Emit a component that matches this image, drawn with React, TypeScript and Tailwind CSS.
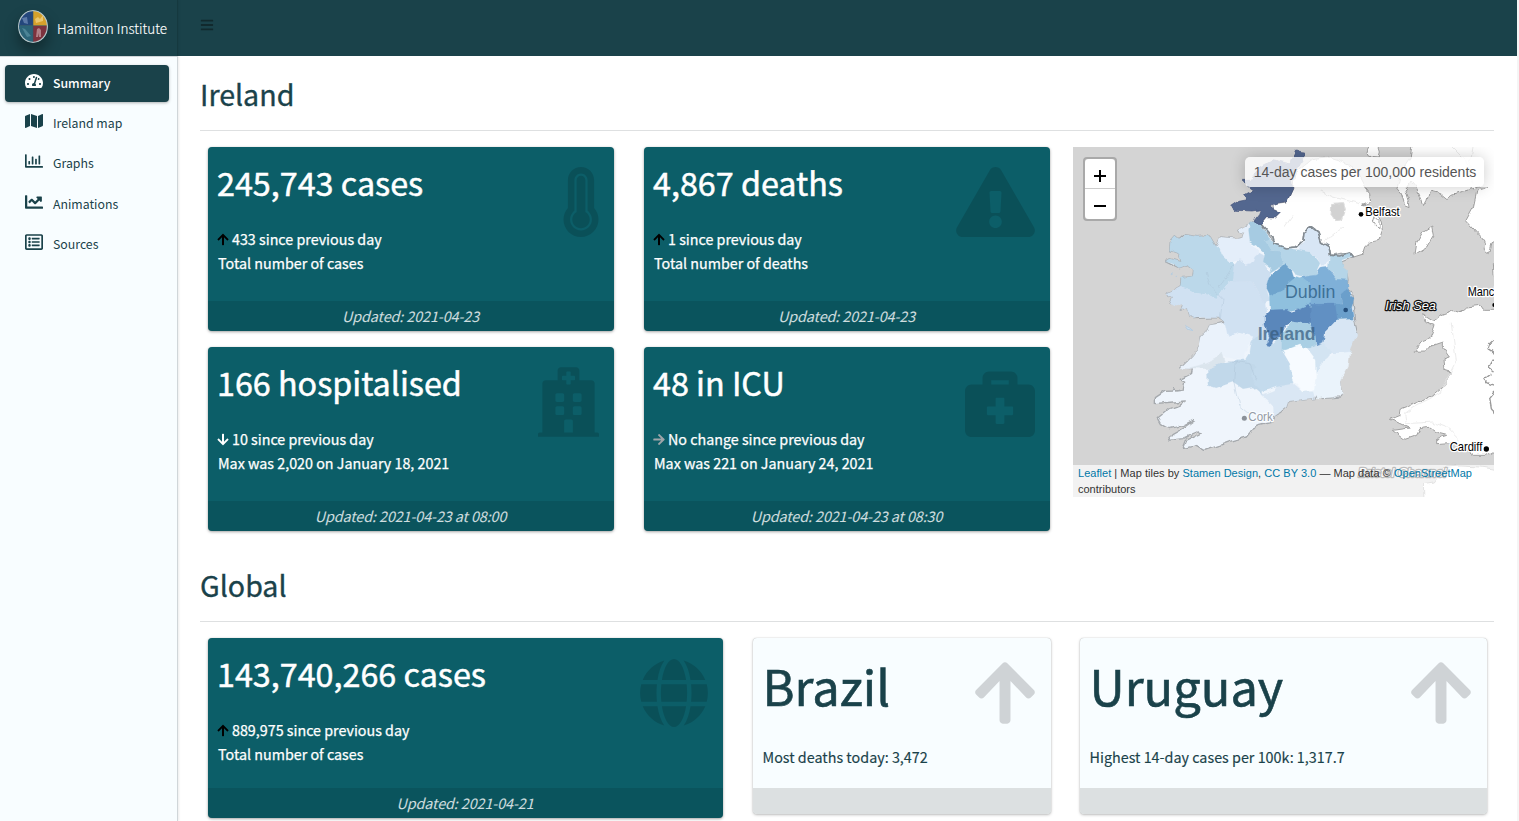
import type { ReactNode } from 'react';
import {
  FaTachometerAlt, FaMap, FaRegChartBar, FaChartLine, FaRegListAlt, FaBars,
  FaThermometerFull, FaExclamationTriangle, FaHospital, FaBriefcaseMedical,
  FaGlobe, FaArrowUp, FaArrowDown, FaArrowRight,
} from 'react-icons/fa';

const NAV = [
  { label: 'Summary', icon: <FaTachometerAlt />, active: true, gap: '' },
  { label: 'Ireland map', icon: <FaMap />, active: false, gap: 'mt-[3px]' },
  { label: 'Graphs', icon: <FaRegChartBar />, active: false, gap: 'mt-[3px]' },
  { label: 'Animations', icon: <FaChartLine />, active: false, gap: 'mt-1' },
  { label: 'Sources', icon: <FaRegListAlt />, active: false, gap: 'mt-[3px]' },
];

function Crest() {
  return (
    <svg viewBox="0 0 30 33" className="h-[33px] w-[30px] rounded-full shadow-[0_8px_14px_rgba(0,0,0,0.35)]">
      <defs>
        <clipPath id="crest"><ellipse cx="15" cy="16.500" rx="13.800" ry="15.300" /></clipPath>
      </defs>
      <ellipse cx="15" cy="16.500" rx="15" ry="16.500" fill="#b4c4c8" />
      <g clipPath="url(#crest)">
        <rect width="15" height="19" fill="#24477c" />
        <rect x="15" width="15" height="16" fill="#d6a12b" />
        <rect y="15" width="15" height="18" fill="#2c6478" />
        <rect x="15" y="16" width="15" height="17" fill="#7d323e" />
        <path d="M4 8l5-1 1 7-4-1z" fill="#5c7aa8" />
        <path d="M17 9l3-2 2 2 3-4 0 6-7 2z" fill="#e9c66e" />
        <path d="M4 18l3 1 6 7-4 1z" fill="#4c8496" />
        <path d="M18 27l1-8 2-1 2 2 0 7h-2l0-4-1 4z" fill="#b08088" />
        <path d="M15 0v33M0 15.500h30" stroke="#38546a" strokeWidth=".6" />
      </g>
    </svg>
  );
}

type CardProps = {
  title: string; icon: ReactNode; lines: ReactNode[]; updated: string; box: string; iconBox: string;
};

function StatCard({ title, icon, lines, updated, box, iconBox }: CardProps) {
  return (
    <div className={`relative flex flex-col overflow-hidden rounded bg-[#0c5e68] text-white shadow-[0_0_1px_rgba(0,0,0,0.125),0_1px_3px_rgba(0,0,0,0.35)] ${box}`}>
      <div className="flex-1 pt-[14px] pl-[9px]">
        <h3 className="text-[32.300px] leading-[43px] whitespace-nowrap [-webkit-text-stroke:0.5px_white]">{title}</h3>
        <div className="mt-[23px] pl-px text-[14.300px] leading-6 [-webkit-text-stroke:0.25px_white]">
          {lines.map((line, i) => <p key={i} className="flex items-center whitespace-nowrap">{line}</p>)}
        </div>
      </div>
      <div className={`absolute text-black/15 ${iconBox}`}>{icon}</div>
      <div className="h-[30px] bg-black/10 pr-px text-center text-[14.400px] leading-[29px] text-white/80 italic">
        <span className="inline-block tracking-[-0.12px]">{updated}</span>
      </div>
    </div>
  );
}

function CountryCard({ title, text, box }: { title: string; text: string; box: string }) {
  return (
    <div className={`relative flex h-44 flex-col overflow-hidden rounded bg-[#f8fdff] text-[#1a424a] shadow-[0_0_1px_rgba(0,0,0,0.3),0_1px_3px_rgba(0,0,0,0.25)] ${box}`}>
      <div className="flex-1 px-[10px] pt-3">
        <h3 className="text-[48.800px] leading-[70px] [-webkit-text-stroke:0.6px_#1a424a]">{title}</h3>
        <p className="mt-[25px] text-[14.350px] leading-6 whitespace-nowrap [-webkit-text-stroke:0.15px_#1a424a]">{text}</p>
      </div>
      <FaArrowUp className="absolute top-5 right-[11px] h-[70px] w-[70px] text-[#cfd3d6]" />
      <div className="h-[26px] bg-[#dce0e1]" />
    </div>
  );
}

const OUTER_COUNTIES: [string, string][] = [
  ['#bbd8ea', 'M335 260L328 270 318 275 305 265 292 280 290 310 318 320 325 345 290 335 275 343 300 350 320 365 345 355 365 370 362 388 325 392 322 422 360 435 400 440 430 457 460 415 480 400 487 380 485 350 470 335 450 325 445 310 428 298 412 270 400 264 375 266z'],
  ['#d0e1f2', 'M322 420L300 432 283 442 300 450 290 470 310 478 330 470 325 490 345 480 350 510 362 515 380 510 440 512 455 525 450 560 465 570 500 558 530 565 550 600 600 600 580 500 575 460 560 440 540 405 480 400 460 415 430 457 400 440 360 435z'],
  ['#e4eefa', 'M428 298L440 270 498 275 508 272 512 258 492 250 527 232 532 250 530 285 550 310 558 318 545 330 540 345 515 355 500 335 470 345 450 325 445 310z'],
  ['#cddff0', 'M487 352L500 335 515 355 540 345 545 330 558 318 572 325 575 350 593 380 580 425 590 460 575 470 560 440 540 405 480 402z'],
  ['#dae7f4', 'M566 745L605 730 616 711 663 711 690 734 721 734 725 755 645 765 640 780 600 810 598 775z'],
  ['#eaf2fb', 'M455 528L440 530 410 535 400 555 385 570 380 595 360 625 320 665 350 665 400 655 440 625 510 637 525 600 540 572 495 558 465 572z'],
  ['#c1d8ea', 'M403 662L440 650 490 638 550 640 570 745 540 720 510 725 480 705 430 722 405 715z'],
  ['#dbe5ed', 'M350 662L400 650 430 635 445 615 455 645 400 665z'],
];

const INNER_COUNTIES: [string, string][] = [
  ['#c4dbed', 'M95 365L135 325 140 350 150 378 185 345 185 390 215 440 222 490 170 500 125 515 90 470 110 440 75 420 90 395z'],
  ['#a6cbe2', 'M90 8L120 10 140 40 150 60 137 65 155 95 180 95 192 135 150 160 155 145 130 125 135 100 115 80 90 65 86 30z'],
  ['#b5d5e8', 'M135 65L150 60 165 70 210 85 235 90 270 95 300 132 285 165 262 170 230 165 220 150 190 133 180 97 155 95z'],
  ['#d8e6f5', 'M235 90L240 75 255 65 252 40 272 22 295 40 305 70 325 75 330 105 330 118 305 140 290 115 270 95z'],
  ['#b5d5e8', 'M330 105L360 107 385 95 398 108 365 120 370 142 383 150 382 182 350 180 340 160 325 145 328 120z'],
  ['#7fb0d8', 'M245 172L285 165 300 145 325 142 350 178 382 180 385 210 362 225 365 265 340 256 270 256 268 220 240 200z'],
  ['#8fc0de', 'M148 222L190 210 205 185 220 168 250 175 270 190 272 260 230 268 200 272 150 270z'],
  ['#6fa4cd', 'M140 205L150 170 195 133 215 150 222 172 200 190 190 215 150 225z'],
  ['#6b9fcb', 'M362 225L385 208 392 230 402 235 395 262 400 302 345 300 340 256 365 250z'],
  ['#5a87bb', 'M135 285L150 270 200 268 215 275 262 255 274 262 272 315 245 315 215 305 195 320 182 350 160 360 152 378 138 375 148 350 135 315z'],
  ['#6190c3', 'M272 253L345 252 352 300 315 335 312 375 288 380 285 345 270 320z'],
  ['#a9cfe4', 'M185 345L215 305 270 312 286 345 287 387 245 385 215 394 185 392z'],
  ['#d8e6f4', 'M350 300L402 298 410 350 388 402 330 398 310 372 318 335z'],
  ['#d3e4f2', 'M270 385L312 370 332 395 325 415 295 440 283 472 272 430 258 385z'],
  ['#eaf3fb', 'M283 470L300 435 345 400 390 396 385 440 362 480 368 520 340 532 290 534 280 515z'],
  ['#f7fbff', 'M190 395L240 375 258 385 285 420 287 470 282 510 250 515 220 480 210 430z'],
];

function IrelandMap() {
  return (
    <div className="relative h-[350px] w-[421px] shrink-0 overflow-hidden bg-[#d4d4d4] font-['Liberation_Sans',sans-serif]">
      <svg viewBox="0 0 1263 1050" className="block h-[350px] w-[421px]">
        <defs>
          <filter id="rough" x="0" y="0" width="100%" height="100%" colorInterpolationFilters="sRGB">
            <feTurbulence type="fractalNoise" baseFrequency="0.04" numOctaves="2" seed="4" result="n" />
            <feDisplacementMap in="SourceGraphic" in2="n" scale="16" xChannelSelector="R" yChannelSelector="G" />
          </filter>
        </defs>
        <g filter="url(#rough)">
          <path d="M-30 -30H1300V1100H-30z" fill="#d4d4d4" />
          <g fill="#fff" stroke="#a0a0a0" strokeWidth="3" strokeLinejoin="round">
            <path d="M565 230L580 212 605 212 622 195 597 188 597 170 640 165 659 125 665 80 695 55 720 35 760 30 800 42 840 60 862 95 875 120 890 140 893 165 868 175 893 180 912 200 925 225 928 250 918 280 890 285 875 300 868 322 842 330 830 315 800 327 773 325 768 300 745 285 735 255 715 240 693 255 690 280 670 300 640 303 605 290 600 270z" />
            <path d="M1020 -25L1012 30 985 70 978 100 972 125 985 140 997 180 1008 185 1005 160 996 130 1015 105 1030 125 1042 150 1053 177 1062 160 1070 132 1100 140 1122 158 1136 145 1160 138 1185 130 1215 120 1245 120 1212 130 1201 180 1179 220 1220 265 1236 285 1233 310 1246 320 1254 290 1290 280V-25z" />
            <path d="M890 -15L882 15 890 28 915 30 919 15 910 -15zM1076 240L1081 265 1061 300 1026 322 1031 290 1051 255zM903 205l15 15 0 25-10-8-10-15z" />
            <path d="M1049 500L1081 520 1101 505 1141 490 1161 497 1181 480 1221 475 1231 490 1295 490V895L1241 925 1201 925 1161 895 1131 887 1091 890 1091 875 1121 865 1101 860 1071 840 1041 845 1031 865 996 877 961 850 1009 843 971 825 949 817 979 805 981 787 1036 765 1081 745 1111 720 1133 675 1116 670 1113 635 1129 630 1111 605 1111 585 1066 600 1055 612 1024 613 1046 585 1071 575 1086 535 1060 525z" />
            <path d="M1290 330L1258 350 1260 385 1290 400zM1290 970L1221 960 1161 957 1121 960 1101 975 1081 1005 1051 1010 1054 1080H1290z" />
            <path d="M776 172L812 170 817 190 808 219 785 221 774 205z" fill="#d2d2d2" stroke="#ddd" />
          </g>
          <g fill="none" stroke="#999" strokeWidth="4">
            <path d="M1266 575L1250 590 1245 605 1266 620M1263 635L1248 660 1268 675M1255 678L1233 695 1245 708 1266 715M1266 735L1250 755 1255 785 1266 800" />
          </g>
          <g fill="none" stroke="#ececec" strokeWidth="3">
            <path d="M740 130L780 150 860 170M660 205L635 240M810 240L780 265 750 285M1140 0L1180 40 1200 110M1135 530L1150 640 1100 740 1030 775 995 800 1000 830 1080 825 1120 840 1160 880M1200 0L1190 60" />
          </g>
          <path d="M527 232L492 250 512 258 508 272 498 275 440 270 428 298 412 270 400 264 375 266 335 260 318 275 305 265 292 280 290 310 318 320 325 345 290 335 275 343 320 365 345 355 365 370 362 388 325 392 322 420 283 442 300 450 290 470 330 470 325 490 345 480 350 510 362 515 440 512 455 525 410 535 400 555 385 570 380 595 360 625 320 663 358 665 355 680 320 698 335 705 330 732 308 735 305 722 300 732 275 733 247 752 247 770 300 765 340 762 320 775 280 790 252 812 262 830 290 845 330 835 365 818 335 840 300 860 285 880 330 875 375 855 385 858 340 880 330 905 370 895 395 910 440 895 480 880 520 870 540 845 560 835 600 825 605 805 621 797 640 780 645 765 725 755 733 735 745 755 800 750 808 735 800 690 825 625 830 590 853 555 845 525 840 465 835 435 818 425 825 400 822 380 810 370 805 345 842 330 830 315 773 325 768 300 745 285 735 255 715 240 693 255 690 280 670 300 640 303 605 290 565 230z" fill="#eff5fc" stroke="#a5a9ad" strokeWidth="4" strokeLinejoin="round" />
          {OUTER_COUNTIES.map(([fill, d], i) => <path key={i} d={d} fill={fill} stroke={fill} strokeWidth="1" />)}
          <g transform="translate(441 219)">
            {INNER_COUNTIES.map(([fill, d], i) => <path key={i} d={d} fill={fill} stroke={fill} strokeWidth="1" />)}
          </g>
          <path d="M400 375L410 415 450 455 442 515M485 350L440 420M490 640L485 705 500 775 530 800M460 640L530 650 550 700" fill="none" stroke="#a9c0d4" strokeOpacity=".4" strokeWidth="3" />
          <path d="M565 230L600 270 605 290 640 303 670 300 690 280 693 255 715 240 735 255 745 285 768 300 773 325 800 327 830 315 842 330" fill="none" stroke="#838b92" strokeWidth="5" strokeLinejoin="round" />
          <path d="M505 100L527 120 540 130 512 145 520 155 495 160 473 175 490 190 540 192 565 188 560 200 548 215 543 228 565 230 580 212 605 212 622 195 600 190 595 175 610 168 642 163 659 125 655 90 690 40 695 15 668 12 650 50 600 38 560 60 530 100z" fill="#53678f" stroke="#42527a" strokeWidth="2" />
          <path d="M335 535l15 8 10 8-18-5zM292 382l8-5M305 385l8 0" fill="#cfe0f1" stroke="#b6cde0" strokeWidth="3" />
        </g>
        <g fontFamily="Liberation Sans, sans-serif" strokeLinejoin="round">
          <circle cx="864" cy="202" r="7" />
          <text x="877" y="208" fontSize="37" textLength="103" lengthAdjust="spacingAndGlyphs" stroke="#fff" strokeWidth="8" style={{ paintOrder: 'stroke' }}>Belfast</text>
          <text x="1184" y="447" fontSize="37" textLength="98" lengthAdjust="spacingAndGlyphs" stroke="#fff" strokeWidth="8" style={{ paintOrder: 'stroke' }}>Manch</text>
          <circle cx="1264" cy="474" r="6" />
          <text x="937" y="490" fontSize="37" textLength="152" lengthAdjust="spacingAndGlyphs" fontStyle="italic" fill="#fff" stroke="#111" strokeWidth="7" style={{ paintOrder: 'stroke' }}>Irish Sea</text>
          <text x="636" y="454" fontSize="55" textLength="151" lengthAdjust="spacingAndGlyphs" fill="#2c5d84" fillOpacity=".8">Dublin</text>
          <circle cx="818" cy="489" r="7" fill="#254f7c" />
          <text x="554" y="579" fontSize="53" fontWeight="bold" textLength="174" lengthAdjust="spacingAndGlyphs" fill="#365c7e" fillOpacity=".72">Ireland</text>
          <circle cx="514" cy="814" r="7.500" fill="#8b9199" />
          <text x="526" y="821" fontSize="37" textLength="73" lengthAdjust="spacingAndGlyphs" fill="#949aa5" stroke="#fafdff" strokeWidth="7" style={{ paintOrder: 'stroke' }}>Cork</text>
          <circle cx="1240" cy="906" r="8" />
          <text x="1130" y="913" fontSize="37" textLength="98" lengthAdjust="spacingAndGlyphs" stroke="#fff" strokeWidth="8" style={{ paintOrder: 'stroke' }}>Cardiff</text>
          <text x="856" y="990" fontSize="40" textLength="264" lengthAdjust="spacingAndGlyphs" fontStyle="italic" fill="#fff" stroke="#222" strokeWidth="8" style={{ paintOrder: 'stroke' }}>Bristol Channel</text>
        </g>
      </svg>
      <div className="absolute top-2.5 left-2.5 flex h-16 w-[34px] flex-col rounded border-2 border-black/20 bg-clip-padding">
        <button className="flex h-[30px] items-center justify-center rounded-t-sm border-b border-[#ccc] bg-white pt-1">
          <svg viewBox="0 0 12 12" className="h-3 w-3"><path d="M6 0v12M0 6h12" stroke="#000" strokeWidth="2" /></svg>
        </button>
        <button className="flex h-[30px] items-center justify-center rounded-b-sm bg-white pt-1">
          <svg viewBox="0 0 12 12" className="h-3 w-3"><path d="M0 6h12" stroke="#000" strokeWidth="2" /></svg>
        </button>
      </div>
      <div className="absolute top-2.5 right-2.5 flex h-[30px] w-[239px] items-center justify-center rounded-[5px] bg-white/80 pl-px text-[14px] whitespace-nowrap text-[#555] shadow-[0_0_15px_rgba(0,0,0,0.2)]">
        14-day cases per 100,000 residents
      </div>
      <div className="absolute bottom-0 left-0 h-8 w-[421px] bg-white/70 pl-[5px] text-[11px] leading-4 text-[#333]">
        <p className="tracking-[0.03px] whitespace-nowrap"><a className="text-[#0078a8]">Leaflet</a> | Map tiles by <a className="text-[#0078a8]">Stamen Design</a>, <a className="text-[#0078a8]">CC BY 3.0</a> — Map data © <a className="text-[#0078a8]">OpenStreetMap</a></p>
        <p>contributors</p>
      </div>
    </div>
  );
}

function SectionTitle({ children, gap }: { children: ReactNode; gap: string }) {
  return <h1 className={`border-b border-[#dee0e1] text-[28.600px] leading-[38px] text-[#1a424a] [-webkit-text-stroke:0.35px_#1a424a] ${gap}`}>{children}</h1>;
}

export default function App() {
  const up = <FaArrowUp className="mr-[3px] -ml-px h-[13px] w-3 text-black" />;
  return (
    <div className="flex h-[821px] w-[1519px] overflow-hidden bg-white font-['Noto_Sans_CJK_SC',sans-serif]">
      <aside className="z-10 flex w-[178px] shrink-0 flex-col shadow-[1px_0_2px_rgba(0,0,0,0.08)]">
        <div className="flex h-[56px] shrink-0 items-center border-r border-[#15393f] bg-[#1a424a] pl-[18px]">
          <div className="-mt-[3px] h-[33px]"><Crest /></div>
          <span className="-mt-px ml-[9px] text-[13.500px] leading-6 font-light whitespace-nowrap text-white [-webkit-text-stroke:0.15px_white]">Hamilton Institute</span>
        </div>
        <nav className="flex-1 border-t border-r border-[#d0d6d9] bg-[#f8fdff] pt-2 pl-[5px]">
          {NAV.map((n) => (
            <a key={n.label} className={`flex h-[37px] w-[164px] items-center rounded pl-[19px] ${n.gap} ${n.active ? 'bg-[#1a424a] font-medium text-white shadow-[0_1px_3px_rgba(0,0,0,0.3)]' : 'text-[#1a424a]'}`}>
              <span className="-mt-[5px] flex w-[21px] justify-center pr-px text-[18px]">{n.icon}</span>
              <span className="-mt-0.5 ml-2 text-[12.300px] leading-5 whitespace-nowrap">{n.label}</span>
            </a>
          ))}
        </nav>
      </aside>
      <div className="flex w-[1339px] shrink-0 flex-col">
        <header className="flex h-14 shrink-0 items-start bg-[#1a424a] pt-[18px] pl-[22px]">
          <FaBars className="h-[14px] w-[14px] text-[#11292d]" />
        </header>
        <main className="pr-[23px] pl-[22px]">
          <SectionTitle gap="pt-[19px] pb-[17px]">Ireland</SectionTitle>
          <div className="mt-4 flex pl-2">
            <div className="grid grid-cols-[406px_406px] gap-x-[30px] gap-y-4">
              <StatCard box="h-[184px]" title="245,743 cases" iconBox="top-5 right-[15px] text-[70px]" icon={<FaThermometerFull className="-mr-[17px]" />} lines={[<>{up}433 since previous day</>, 'Total number of cases']} updated="Updated: 2021-04-23" />
              <StatCard box="h-[184px]" title="4,867 deaths" iconBox="top-5 right-[15px]" icon={<FaExclamationTriangle className="h-[70px] w-[79px]" />} lines={[<>{up}1 since previous day</>, 'Total number of deaths']} updated="Updated: 2021-04-23" />
              <StatCard box="h-[184px]" title="166 hospitalised" iconBox="top-5 right-[15px]" icon={<FaHospital className="h-[70px] w-[61px]" />} lines={[<><FaArrowDown className="mr-[3px] -ml-px h-[13px] w-3" />10 since previous day</>, 'Max was 2,020 on January 18, 2021']} updated="Updated: 2021-04-23 at 08:00" />
              <StatCard box="h-[184px]" title="48 in ICU" iconBox="top-5 right-[15px]" icon={<FaBriefcaseMedical className="h-[70px] w-[70px]" />} lines={[<><FaArrowRight className="mr-[3px] -ml-px h-[13px] w-3 text-[#9ea5a9]" />No change since previous day</>, 'Max was 221 on January 24, 2021']} updated="Updated: 2021-04-23 at 08:30" />
            </div>
            <div className="ml-[23px]"><IrelandMap /></div>
          </div>
          <SectionTitle gap="pt-[35px] pb-[17px]">Global</SectionTitle>
          <div className="mt-4 flex items-start pl-2">
            <StatCard box="h-[180px] w-[515px]" title="143,740,266 cases" iconBox="top-5 right-[15px]" icon={<FaGlobe className="h-[70px] w-[68px]" />} lines={[<>{up}889,975 since previous day</>, 'Total number of cases']} updated="Updated: 2021-04-21" />
            <CountryCard box="ml-[29.5px] w-[298px]" title="Brazil" text="Most deaths today: 3,472" />
            <CountryCard box="ml-[29px] w-[407px]" title="Uruguay" text="Highest 14-day cases per 100k: 1,317.7" />
          </div>
        </main>
      </div>
      <div className="w-[2px] shrink-0 bg-[#f5f5f5]" />
    </div>
  );
}
